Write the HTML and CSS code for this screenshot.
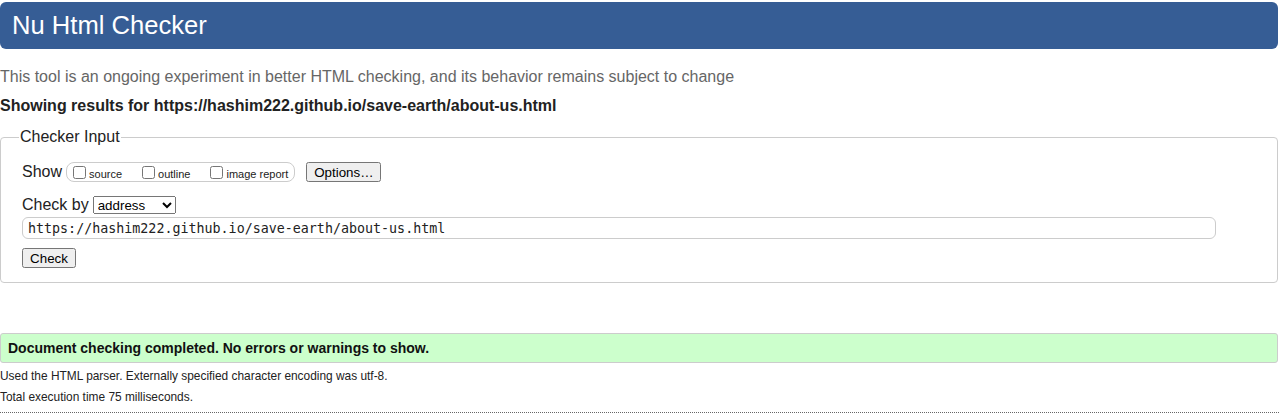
FILE: index.html
```html
<!DOCTYPE html>
<html lang="en">
<head>
<meta charset="utf-8">
<title>Nu Html Checker</title>
<link rel="stylesheet" href="styles.css">
</head>
<body>
<h1 class="title">Nu Html Checker</h1>
<p class="intro">This tool is an ongoing experiment in better HTML checking, and its behavior remains subject to change</p>
<p class="results-for">Showing results for https://hashim222.github.io/save-earth/about-us.html</p>
<form class="form">
<fieldset class="checker">
<legend class="checker-legend">Checker Input</legend>
<div class="row show-row">
<span class="row-label">Show</span>
<fieldset class="show-box">
<label class="opt"><input type="checkbox" class="cb"><span class="opt-text">source</span></label>
<label class="opt"><input type="checkbox" class="cb"><span class="opt-text">outline</span></label>
<label class="opt"><input type="checkbox" class="cb"><span class="opt-text">image report</span></label>
</fieldset>
<button type="button" class="btn options-btn">Options…</button>
</div>
<div class="row checkby-row">
<span class="row-label">Check by</span>
<select class="sel"><option>address</option><option>file upload</option><option>text input</option></select>
</div>
<input type="text" class="url" value="https://hashim222.github.io/save-earth/about-us.html">
<div class="row submit-row">
<button type="button" class="btn check-btn">Check</button>
</div>
</fieldset>
</form>
<div class="success"><p class="success-text">Document checking completed. No errors or warnings to show.</p></div>
<p class="details details-first">Used the HTML parser. Externally specified character encoding was utf-8.</p>
<p class="details">Total execution time 75 milliseconds.</p>
<hr class="sep">
</body>
</html>
```
FILE: styles.css
```css
html, body {
  margin: 0;
  padding: 0;
  background: #fff;
}
body {
  font-family: "Liberation Sans", Arial, sans-serif;
  color: #222;
}
.title {
  margin: 2px 1px 0 0;
  height: 47px;
  box-sizing: border-box;
  padding: 0 12px;
  background: #365d95;
  color: #fff;
  font-weight: normal;
  font-size: 25.6px;
  line-height: 47px;
  border-radius: 6px;
}
.intro {
  margin: 19px 0 0 0;
  font-size: 16px;
  line-height: 18px;
  color: #666;
}
.results-for {
  margin: 11px 0 0 0;
  font-size: 16px;
  line-height: 18px;
  font-weight: bold;
  color: #222;
}
.form {
  margin: 13px 0 0 0;
}
.checker {
  margin: 0 1px 0 0;
  padding: 16px 21px 14px 21px;
  border: 1px solid #ccc;
  border-radius: 4px;
  min-width: 0;
}
.checker-legend {
  padding: 0 1px;
  margin-left: -3px;
  font-size: 16px;
  line-height: 18px;
  color: #222;
}
.row {
  display: flex;
  align-items: center;
}
.row-label {
  font-size: 16px;
  line-height: 18px;
  color: #222;
}
.show-row {
  height: 20px;
}
.show-box {
  display: flex;
  align-items: center;
  margin: 0 0 0 4px;
  padding: 0 6px 0 6px;
  height: 20px;
  box-sizing: border-box;
  border: 1px solid #ccc;
  border-radius: 8px;
  gap: 20px;
  min-width: 0;
}
.opt {
  display: flex;
  align-items: center;
  font-size: 11px;
  color: #222;
}
.cb {
  margin: 0 3px 0 0;
  width: 13px;
  height: 13px;
}
.opt-text {
  line-height: 13px;
  position: relative;
  top: 2px;
}
.btn {
  font-family: "Liberation Sans", Arial, sans-serif;
  font-size: 13.33px;
  height: 20px;
  padding: 0 6px;
  color: #000;
}
.options-btn {
  margin-left: 11px;
  width: 75px;
}
.checkby-row {
  margin-top: 14px;
  height: 18px;
}
.sel {
  margin-left: 4px;
  width: 83px;
  height: 18px;
  font-family: "Liberation Sans", Arial, sans-serif;
  font-size: 13.33px;
}
.url {
  display: block;
  box-sizing: border-box;
  margin-top: 3px;
  width: 1194px;
  height: 22px;
  padding: 0 5px;
  border: 1px solid #ccc;
  border-radius: 6px;
  font-family: "DejaVu Sans Mono", monospace;
  font-size: 13.33px;
  color: #222;
}
.submit-row {
  margin-top: 9px;
}
.check-btn {
  width: 54px;
}
.success {
  margin: 50px 1px 0 0;
  height: 30px;
  box-sizing: border-box;
  background: #ccffcc;
  border: 1px solid #ccc;
  border-radius: 3px;
  display: flex;
  align-items: center;
  padding: 0 7px;
}
.success-text {
  margin: 0;
  font-size: 14px;
  font-weight: bold;
  color: #111;
}
.details {
  margin: 7px 0 0 0;
  font-size: 11.9px;
  line-height: 14px;
  color: #222;
}
.details-first {
  margin-top: 6px;
}
.sep {
  margin: 8px 0 0 0;
  border: 0;
  border-top: 1px dotted #666;
  height: 0;
}
```
